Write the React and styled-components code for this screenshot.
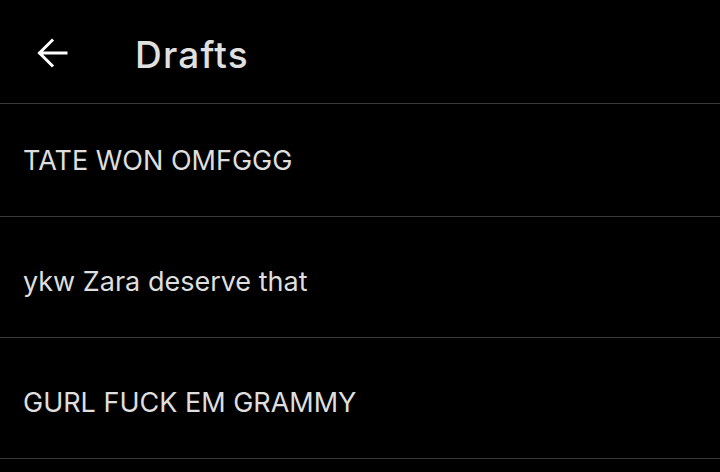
import React from "react";
import styled, { createGlobalStyle } from "styled-components";

const GlobalStyle = createGlobalStyle`
  html, body {
    margin: 0;
    padding: 0;
    background: #000;
  }
  body {
    font-family: Inter, "Noto Sans", sans-serif;
    -webkit-font-smoothing: antialiased;
  }
`;

const drafts = ["TATE WON OMFGGG", "ykw Zara deserve that", "GURL FUCK EM GRAMMY"];

const App = () => {
  return (
    <Page>
      <GlobalStyle />
      <Header>
        <BackButton aria-label="Back">
          <svg width="32" height="32" viewBox="0 0 32 32" fill="none">
            <path
              d="M30 16H4M16 3.5L3.5 16 16 28.5"
              stroke="#fff"
              strokeWidth="3"
              strokeLinecap="square"
            />
          </svg>
        </BackButton>
        <Title>Drafts</Title>
      </Header>
      <List>
        {drafts.map((d, i) => (
          <Row key={i} $first={i === 0}>
            {d}
          </Row>
        ))}
      </List>
    </Page>
  );
};

export default App;

const Page = styled.div`
  width: 720px;
  height: 472px;
  overflow: hidden;
  background: #000;
`;

const Header = styled.div`
  display: flex;
  align-items: center;
  height: 104px;
  padding-top: 6px;
  border-bottom: 1px solid #3a3a3c;
  box-sizing: border-box;
`;

const BackButton = styled.button`
  display: flex;
  align-items: center;
  justify-content: center;
  background: transparent;
  border: none;
  padding: 0;
  margin: 0 0 4px 36px;
  width: 32px;
  height: 32px;
  cursor: pointer;
`;

const Title = styled.h1`
  margin: 0 0 0 67px;
  font-size: 37px;
  font-weight: 500;
  letter-spacing: 1.2px;
  color: #e0e0e0;
`;

const List = styled.div`
  display: flex;
  flex-direction: column;
`;

const Row = styled.div`
  display: flex;
  align-items: flex-end;
  height: ${(p) => (p.$first ? "113px" : "121px")};
  padding: 0 0 39px 23px;
  box-sizing: border-box;
  border-bottom: 1px solid #3a3a3c;
  font-size: 27px;
  color: #dedede;
`;
